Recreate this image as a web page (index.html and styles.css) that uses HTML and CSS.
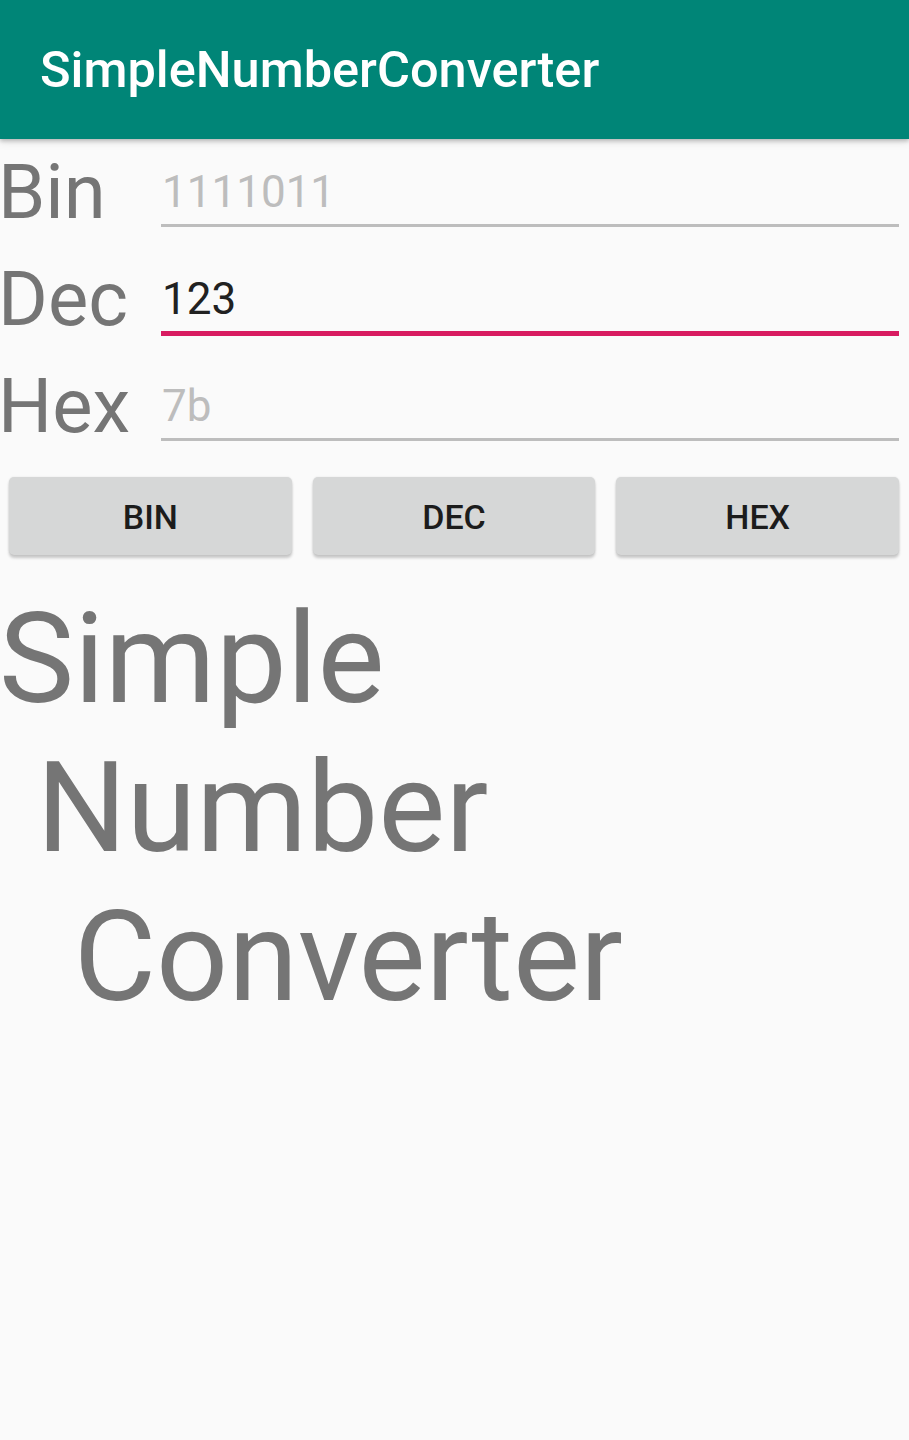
FILE: index.html
```html
<!DOCTYPE html>
<html lang="en">
<head>
<meta charset="utf-8">
<title>SimpleNumberConverter</title>
<link rel="stylesheet" href="styles.css">
</head>
<body>
<div class="app">
  <header class="toolbar">
    <h1 class="toolbar-title">SimpleNumberConverter</h1>
  </header>
  <main class="content">
    <div class="row">
      <div class="label">Bin</div>
      <div class="field"><span class="hint">1111011</span></div>
    </div>
    <div class="row">
      <div class="label">Dec</div>
      <div class="field focused"><span class="value">123</span></div>
    </div>
    <div class="row">
      <div class="label">Hex</div>
      <div class="field"><span class="hint">7b</span></div>
    </div>
    <div class="buttons">
      <button class="btn">BIN</button>
      <button class="btn">DEC</button>
      <button class="btn">HEX</button>
    </div>
    <div class="big-text">Simple
 Number
  Converter</div>
  </main>
</div>
</body>
</html>
```
FILE: styles.css
```css
html, body {
  margin: 0;
  padding: 0;
  background: #fafafa;
}
body {
  width: 909px;
  height: 1440px;
  overflow: hidden;
  font-family: Roboto, "Noto Sans", "Liberation Sans", sans-serif;
}
.app {
  display: flex;
  flex-direction: column;
  height: 1440px;
  background: #fafafa;
}
.toolbar {
  position: relative;
  z-index: 2;
  height: 139px;
  flex: none;
  background: #008577;
  display: flex;
  align-items: center;
  padding-left: 40px;
  box-shadow: 0 2px 4px rgba(0, 0, 0, 0.22), 0 4px 8px rgba(0, 0, 0, 0.08);
}
.toolbar-title {
  margin: 0;
  font-size: 50.5px;
  font-weight: 500;
  color: #ffffff;
  line-height: normal;
}
.content {
  display: flex;
  flex-direction: column;
}
.row {
  height: 107px;
  display: flex;
  align-items: flex-start;
  padding-right: 10px;
}
.label {
  width: 163px;
  flex: none;
  margin-top: 9px;
  margin-left: -2px;
  font-size: 76px;
  line-height: 89px;
  color: #757575;
}
.field {
  flex: 1;
  margin-top: 27px;
  height: 58px;
  line-height: 52px;
  padding-left: 1px;
  font-size: 44px;
  border-bottom: 3px solid #bdbdbd;
}
.field.focused {
  border-bottom: 5px solid #d81b60;
}
.hint {
  color: #bdbdbd;
}
.value {
  color: #212121;
}
.buttons {
  display: flex;
  gap: 21px;
  padding: 0 10px 0 9px;
  margin-top: 17px;
}
.btn {
  flex: 1;
  height: 78px;
  border: none;
  border-radius: 5px;
  background: #d6d7d7;
  color: #1c1c1c;
  font-family: Roboto, "Noto Sans", "Liberation Sans", sans-serif;
  font-size: 34px;
  font-weight: 500;
  padding: 2px 0 0 0;
  box-shadow: 0 3px 3px rgba(0, 0, 0, 0.2), 0 0 2px rgba(0, 0, 0, 0.1);
}
.big-text {
  margin-top: 30px;
  margin-left: -1px;
  white-space: pre;
  font-size: 126.5px;
  line-height: 149px;
  word-spacing: 6px;
  color: #757575;
}
```
